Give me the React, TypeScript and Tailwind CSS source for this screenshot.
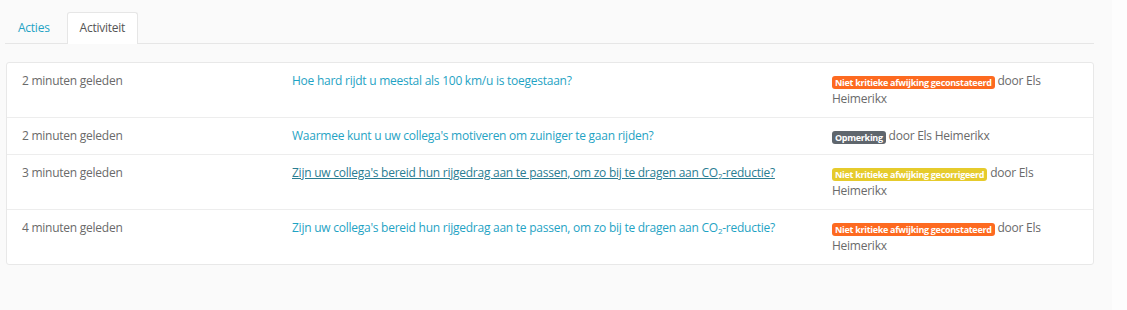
import React from 'react';

type Badge = { label: string; color: string };

const co2Question = (
  <>
    Zijn uw collega's bereid hun rijgedrag aan te passen, om zo bij te dragen aan CO
    <sub className="text-[8px]">2</sub>-reductie?
  </>
);

const rows: { time: string; question: React.ReactNode; badge: Badge; underline?: boolean }[] = [
  {
    time: '2 minuten geleden',
    question: 'Hoe hard rijdt u meestal als 100 km/u is toegestaan?',
    badge: { label: 'Niet kritieke afwijking geconstateerd', color: 'bg-[#fd6a20]' },
  },
  {
    time: '2 minuten geleden',
    question: "Waarmee kunt u uw collega's motiveren om zuiniger te gaan rijden?",
    badge: { label: 'Opmerking', color: 'bg-[#5f666d]' },
  },
  {
    time: '3 minuten geleden',
    question: co2Question,
    badge: { label: 'Niet kritieke afwijking gecorrigeerd', color: 'bg-[#e6cb2c]' },
    underline: true,
  },
  {
    time: '4 minuten geleden',
    question: co2Question,
    badge: { label: 'Niet kritieke afwijking geconstateerd', color: 'bg-[#fd6a20]' },
  },
];

export default function App() {
  return (
    <div className="flex h-[310px] w-full bg-[#fafafa] font-['Open_Sans',sans-serif] text-[12px] tracking-[-0.25px] text-[#6a6a6a]">
      <div className="w-[1112px] pl-[5px] pr-[18px] pt-[12px]">
        {/* tabs */}
        <div className="flex border-b border-[#e6e6e6] pl-[3px]">
          <div className="px-[10px] pt-[7px] pb-[6px] leading-[18px] text-[#1fa3c4]">Acties</div>
          <div className="-mb-px ml-[7px] rounded-t-[3px] border border-b-0 border-[#e6e6e6] bg-white px-[12px] pt-[6px] pb-[7px] leading-[18px] text-[#555]">
            Activiteit
          </div>
        </div>

        {/* activity card */}
        <div className="mt-[18px] ml-px rounded-[3px] border border-[#e8e8e8] bg-white">
          {rows.map((row, i) => (
            <div
              key={i}
              className={`grid grid-cols-[270px_540px_1fr] py-[9px] leading-[18px] ${i > 0 ? 'border-t border-[#ededed]' : ''}`}
            >
              <div className="px-[15px]">{row.time}</div>
              <div className="px-[15px]">
                <a className={row.underline ? 'text-[#2a7d92] underline' : 'text-[#1fa3c4]'} href="#">
                  {row.question}
                </a>
              </div>
              <div className="pl-[15px] pr-[15px]">
                <span
                  className={`${row.badge.color} inline-block rounded-[3px] px-[3px] py-[1px] align-[-1px] text-[9px] font-bold leading-[11px] tracking-[-0.3px] text-white`}
                >
                  {row.badge.label}
                </span>{' '}
                door Els Heimerikx
              </div>
            </div>
          ))}
        </div>
      </div>
      <div className="flex-1 bg-[#fdfdfd]" />
    </div>
  );
}
